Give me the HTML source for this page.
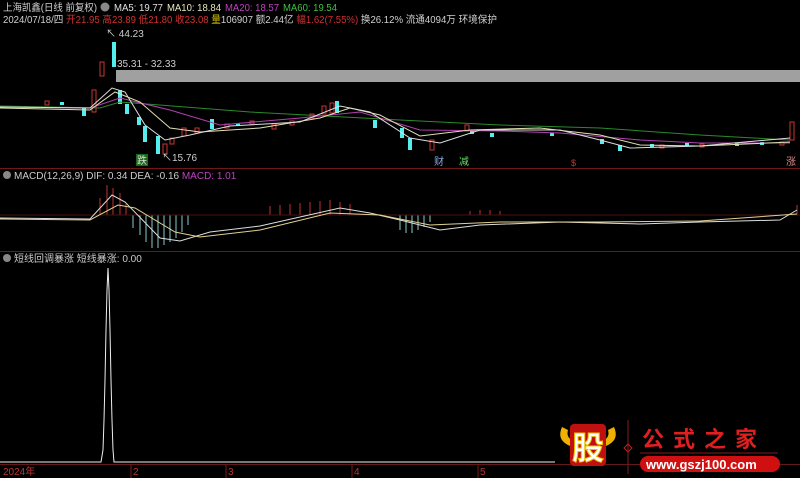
<!DOCTYPE html>
<html><head><meta charset="utf-8"><style>
html,body{margin:0;padding:0;background:#000;width:800px;height:478px;overflow:hidden}
svg{display:block}
text{font-family:"Liberation Sans","Noto Sans CJK SC",sans-serif}
</style></head><body>
<svg width="800" height="478" viewBox="0 0 800 478" xmlns="http://www.w3.org/2000/svg">
<rect width="800" height="478" fill="#000"/>
<!-- header -->
<text x="3" y="11" font-size="10" fill="#d0d0d0" textLength="94" lengthAdjust="spacingAndGlyphs">上海凯鑫(日线 前复权)</text>
<circle cx="105" cy="7" r="4.5" fill="#888"/>
<text x="114" y="11" font-size="10" fill="#e0e0e0" textLength="49" lengthAdjust="spacingAndGlyphs">MA5: 19.77</text>
<text x="167" y="11" font-size="10" fill="#e8e8c0" textLength="54" lengthAdjust="spacingAndGlyphs">MA10: 18.84</text>
<text x="225" y="11" font-size="10" fill="#c040c0" textLength="54" lengthAdjust="spacingAndGlyphs">MA20: 18.57</text>
<text x="283" y="11" font-size="10" fill="#40c040" textLength="54" lengthAdjust="spacingAndGlyphs">MA60: 19.54</text>
<text x="3" y="23" font-size="10" fill="#d0d0d0" textLength="494" lengthAdjust="spacingAndGlyphs">2024/07/18/四 <tspan fill="#d03030">开21.95 高23.89 低21.80 收23.08</tspan><tspan fill="#d0c000"> 量</tspan>106907 额2.44亿 <tspan fill="#d03030">幅1.62(7.55%)</tspan> 换26.12% 流通4094万 环境保护</text>
<!-- main chart -->
<text x="106" y="37" font-size="10" fill="#ccc">↖ 44.23</text>
<rect x="116" y="70" width="684" height="12" fill="#a0a0a0"/>
<text x="117" y="67" font-size="10" fill="#ccc">35.31 - 32.33</text>
<rect x="112" y="42" width="4" height="25" fill="#5ee"/>
<rect x="100" y="62" width="4" height="14" fill="none" stroke="#c33"/>
<rect x="92" y="90" width="4" height="22" fill="none" stroke="#c33"/>
<g fill="#5ee">
<rect x="118" y="90" width="4" height="14"/><rect x="125" y="104" width="4" height="10"/>
<rect x="143" y="126" width="4" height="16"/><rect x="156" y="136" width="4" height="18"/>
<rect x="82" y="108" width="4" height="8"/><rect x="137" y="117" width="4" height="8"/>
<rect x="210" y="119" width="4" height="10"/><rect x="408" y="138" width="4" height="12"/>
<rect x="400" y="128" width="4" height="10"/><rect x="373" y="120" width="4" height="8"/>
<rect x="618" y="145" width="4" height="6"/><rect x="600" y="139" width="4" height="5"/>
<rect x="335" y="101" width="4" height="12"/><rect x="60" y="102" width="4" height="3"/>
<rect x="470" y="130" width="4" height="4"/><rect x="490" y="133" width="4" height="4"/>
<rect x="650" y="144" width="4" height="3"/><rect x="685" y="143" width="4" height="3"/>
<rect x="735" y="143" width="4" height="3"/><rect x="760" y="142" width="4" height="3"/>
<rect x="550" y="133" width="4" height="3"/><rect x="236" y="123" width="4" height="3"/>
</g>
<g fill="none" stroke="#c33">
<rect x="163" y="144" width="4" height="10"/><rect x="170" y="138" width="4" height="6"/>
<rect x="182" y="128" width="4" height="8"/><rect x="195" y="128" width="4" height="5"/>
<rect x="322" y="106" width="4" height="8"/><rect x="330" y="103" width="4" height="10"/>
<rect x="430" y="140" width="4" height="10"/><rect x="465" y="125" width="4" height="6"/>
<rect x="790" y="122" width="4" height="18"/><rect x="272" y="124" width="4" height="5"/>
<rect x="290" y="121" width="4" height="4"/><rect x="45" y="101" width="4" height="4"/>
<rect x="225" y="124" width="4" height="4"/><rect x="250" y="121" width="4" height="3"/>
<rect x="310" y="114" width="4" height="4"/><rect x="660" y="145" width="4" height="3"/>
<rect x="700" y="144" width="4" height="3"/><rect x="780" y="142" width="4" height="3"/>
</g>
<g fill="none" stroke-width="1">
<polyline stroke="#2a8a2a" points="0,106 100,108 120,102 250,112 400,120 500,125 600,128 700,135 790,140"/>
<polyline stroke="#b040b0" points="0,107 90,108 120,98 170,110 220,125 300,118 360,112 420,130 500,131 560,133 640,140 700,143 790,143"/>
<polyline stroke="#e0e0b0" points="0,108 90,110 115,92 140,102 170,128 200,132 260,128 320,118 350,108 380,115 420,136 470,130 540,128 600,135 640,145 700,146 790,142"/>
<polyline stroke="#ddd" points="0,107 90,108 112,88 125,92 145,125 165,140 190,135 230,126 300,122 340,106 370,112 410,138 440,143 480,130 560,130 600,140 630,148 700,146 790,138"/>
</g>
<rect x="136" y="154" width="12" height="12" fill="#1a6a1a"/>
<text x="137" y="164" font-size="10" fill="#ddd">跌</text>
<text x="162" y="161" font-size="10" fill="#ccc">↖15.76</text>
<text x="434" y="165" font-size="10" fill="#8ad">财</text>
<text x="459" y="165" font-size="10" fill="#6d6">减</text>
<text x="571" y="166" font-size="9" fill="#c33">$</text>
<text x="786" y="165" font-size="10" fill="#d88">涨</text>
<line x1="0" y1="168.5" x2="800" y2="168.5" stroke="#701818"/>
<!-- MACD -->
<circle cx="7" cy="175" r="4" fill="#888"/>
<text x="14" y="179" font-size="10" fill="#ccc">MACD(12,26,9) DIF: 0.34 DEA: -0.16 <tspan fill="#c040c0">MACD: 1.01</tspan></text>
<g stroke="#b33" stroke-width="1">
<line x1="107" y1="215" x2="107" y2="185"/><line x1="113" y1="215" x2="113" y2="188"/><line x1="120" y1="215" x2="120" y2="193"/><line x1="100" y1="215" x2="100" y2="198"/><line x1="126" y1="215" x2="126" y2="204"/>
<line x1="270" y1="215" x2="270" y2="206"/><line x1="280" y1="215" x2="280" y2="205"/><line x1="290" y1="215" x2="290" y2="204"/><line x1="300" y1="215" x2="300" y2="203"/><line x1="310" y1="215" x2="310" y2="202"/><line x1="320" y1="215" x2="320" y2="201"/><line x1="330" y1="215" x2="330" y2="200"/><line x1="340" y1="215" x2="340" y2="202"/><line x1="350" y1="215" x2="350" y2="204"/><line x1="470" y1="215" x2="470" y2="211"/><line x1="480" y1="215" x2="480" y2="210"/><line x1="490" y1="215" x2="490" y2="210"/><line x1="500" y1="215" x2="500" y2="211"/><line x1="797" y1="215" x2="797" y2="205"/>
</g>
<g stroke="#8cc" stroke-width="1">
<line x1="133" y1="215" x2="133" y2="228"/><line x1="140" y1="215" x2="140" y2="235"/><line x1="146" y1="215" x2="146" y2="242"/><line x1="152" y1="215" x2="152" y2="248"/><line x1="158" y1="215" x2="158" y2="248"/><line x1="164" y1="215" x2="164" y2="245"/><line x1="170" y1="215" x2="170" y2="242"/><line x1="176" y1="215" x2="176" y2="238"/><line x1="182" y1="215" x2="182" y2="232"/><line x1="188" y1="215" x2="188" y2="225"/>
<line x1="400" y1="215" x2="400" y2="230"/><line x1="406" y1="215" x2="406" y2="233"/><line x1="412" y1="215" x2="412" y2="233"/><line x1="418" y1="215" x2="418" y2="230"/><line x1="424" y1="215" x2="424" y2="227"/><line x1="430" y1="215" x2="430" y2="222"/>
</g>
<line x1="0" y1="215" x2="800" y2="215" stroke="#4a1010"/>
<polyline fill="none" stroke="#ddd" points="0,218 90,219 112,195 125,202 160,238 180,241 210,232 260,226 340,208 370,213 400,220 440,230 480,225 560,222 640,224 700,222 780,220 797,210"/>
<polyline fill="none" stroke="#e0d090" points="0,219 90,220 118,205 135,208 175,232 200,237 260,230 330,213 380,215 430,225 500,222 600,222 700,221 797,214"/>
<line x1="0" y1="251.5" x2="800" y2="251.5" stroke="#701818"/>
<!-- third panel -->
<circle cx="7" cy="258" r="4" fill="#888"/>
<text x="14" y="262" font-size="10" fill="#ccc">短线回调暴涨 短线暴涨: 0.00</text>
<polyline fill="none" stroke="#eee" points="0,462 101,462 103,450 104,420 105,380 106,330 107,290 108,268 109,290 110,330 111,380 112,420 113,450 114,462 555,462"/>
<line x1="0" y1="464.5" x2="800" y2="464.5" stroke="#601818"/>
<text x="3" y="475" font-size="10" fill="#b33">2024年</text>
<g stroke="#801818"><line x1="131" y1="464" x2="131" y2="478"/><line x1="226" y1="464" x2="226" y2="478"/><line x1="352" y1="464" x2="352" y2="478"/><line x1="478" y1="464" x2="478" y2="478"/></g>
<text x="133" y="475" font-size="10" fill="#b33">2</text>
<text x="228" y="475" font-size="10" fill="#b33">3</text>
<text x="354" y="475" font-size="10" fill="#b33">4</text>
<text x="480" y="475" font-size="10" fill="#b33">5</text>
<!-- logo -->
<path d="M562,427 Q556,440 570,446 L572,440 Q566,437 568,430 Z" fill="#f0b000"/>
<path d="M614,427 Q620,440 606,446 L604,440 Q610,437 608,430 Z" fill="#f0b000"/>
<rect x="570" y="424" width="36" height="42" rx="4" fill="#c01010"/>
<text x="572" y="459" font-size="32" font-weight="bold" fill="#fff" stroke="#f0c000" stroke-width="1">股</text>
<line x1="628" y1="420" x2="628" y2="474" stroke="#802020"/>
<path d="M628,444 l4,4 l-4,4 l-4,-4z" fill="none" stroke="#c02020"/>
<text x="642" y="447" font-size="22" font-weight="bold" fill="#e02020" letter-spacing="9">公式之家</text>
<line x1="640" y1="453" x2="778" y2="453" stroke="#802020"/>
<rect x="640" y="456" width="140" height="16" rx="8" fill="#d01010"/>
<text x="646" y="469" font-size="13" font-weight="bold" fill="#fff">www.gszj100.com</text>
</svg>
</body></html>
